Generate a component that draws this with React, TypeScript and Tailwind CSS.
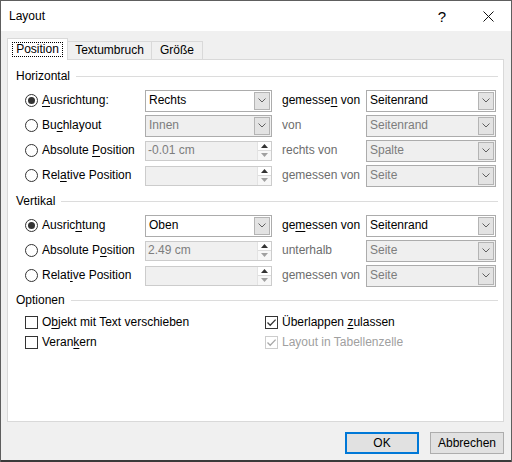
import React from "react";

const font = { fontFamily: '"Liberation Sans", Arial, sans-serif' };

function Mn({ text, at }: { text: string; at: number }) {
  if (at < 0) return <>{text}</>;
  return (
    <>
      {text.slice(0, at)}
      <span className="underline underline-offset-2">{text[at]}</span>
      {text.slice(at + 1)}
    </>
  );
}

function Radio({ checked }: { checked?: boolean }) {
  return (
    <span className="flex h-[13px] w-[13px] shrink-0 items-center justify-center rounded-full border border-[#333] bg-white">
      {checked && <span className="h-[7px] w-[7px] rounded-full bg-[#333]" />}
    </span>
  );
}

function Check({ checked, disabled }: { checked?: boolean; disabled?: boolean }) {
  return (
    <span
      className={
        "flex h-[13px] w-[13px] shrink-0 items-center justify-center border bg-white " +
        (disabled ? "border-[#cccccc]" : "border-[#333]")
      }
    >
      {checked && (
        <svg width="11" height="11" viewBox="0 0 11 11">
          <path
            d="M1.5 5.5 L4.2 8.3 L9.6 2.6"
            fill="none"
            stroke={disabled ? "#a8a8a8" : "#333"}
            strokeWidth="1.3"
          />
        </svg>
      )}
    </span>
  );
}

function Combo({ value, enabled, w }: { value: string; enabled?: boolean; w: string }) {
  return (
    <div
      className={
        "flex h-[22px] shrink-0 border border-[#acacac] " +
        w +
        (enabled ? " bg-white text-black" : " bg-[#efefef] text-[#7d7d7d]")
      }
    >
      <div className="flex flex-1 items-center pl-[3px]">{value}</div>
      <div className="m-px flex w-[16px] items-center justify-center border border-[#b4b4b4] bg-[#e3e3e3]">
        <svg width="8" height="5" viewBox="0 0 8 5">
          <path d="M0.5 0.5 L4 4 L7.5 0.5" fill="none" stroke="#606060" strokeWidth="1" />
        </svg>
      </div>
    </div>
  );
}

function Spin({ value }: { value: string }) {
  return (
    <div className="flex h-[20px] w-[127px] shrink-0 border border-[#cccccc] bg-[#f0f0f0] text-[#7d7d7d]">
      <div className="flex flex-1 items-center pl-[2px]">{value}</div>
      <div className="flex w-[14px] flex-col border-l border-[#e3e3e3]">
        <div className="flex flex-1 items-center justify-center border-b border-[#dcdcdc] bg-white">
          <svg width="7" height="4" viewBox="0 0 7 4">
            <path d="M0 4 L3.5 0 L7 4 Z" fill="#333" />
          </svg>
        </div>
        <div className="flex flex-1 items-center justify-center bg-[#f7f7f7]">
          <svg width="7" height="4" viewBox="0 0 7 4">
            <path d="M0 0 L7 0 L3.5 4 Z" fill="#a0a0a0" />
          </svg>
        </div>
      </div>
    </div>
  );
}

function Header({ title }: { title: string }) {
  return (
    <div className="flex h-[24px] items-center gap-[6px]">
      <span>{title}</span>
      <span className="h-px flex-1 bg-[#dcdcdc]" />
    </div>
  );
}

type RowProps = {
  label: string;
  at: number;
  checked?: boolean;
  field: React.ReactNode;
  rel: string;
  relAt: number;
  relEnabled?: boolean;
  combo: string;
  comboEnabled?: boolean;
};

function Row(p: RowProps) {
  return (
    <div className="flex h-[25px] items-center">
      <div className="flex w-[129px] shrink-0 items-center gap-[4px] pl-[9px]">
        <Radio checked={p.checked} />
        <span>
          <Mn text={p.label} at={p.at} />
        </span>
      </div>
      {p.field}
      <div className={"w-[94px] shrink-0 pl-[10px] " + (p.relEnabled ? "text-black" : "text-[#6d6d6d]")}>
        <Mn text={p.rel} at={p.relAt} />
      </div>
      <Combo value={p.combo} enabled={p.comboEnabled} w="w-[130px]" />
    </div>
  );
}

export default function App() {
  return (
    <div
      style={font}
      className="flex h-[462px] w-[512px] flex-col border-x border-t border-[#5e5e5e] bg-[#f0f0f0] text-[12px] leading-[15px] text-black"
    >
      {/* title bar */}
      <div className="flex h-[30px] shrink-0 items-center bg-white pl-[8px]">
        <span className="flex-1">Layout</span>
        <span className="w-[46px] text-center text-[15px]">?</span>
        <span className="flex w-[46px] items-center justify-center">
          <svg width="11" height="11" viewBox="0 0 11 11">
            <path d="M0.5 0.5 L10.5 10.5 M10.5 0.5 L0.5 10.5" stroke="#111" strokeWidth="1" />
          </svg>
        </span>
      </div>

      {/* tabs */}
      <div className="flex h-[28px] shrink-0 items-end pl-[6px] pt-[7px]">
        <div className="relative z-10 -mb-px flex h-[22px] w-[61px] items-center justify-center border-x border-t border-[#d9d9d9] bg-white">
          <span className="border border-dotted border-black px-[3px] leading-[13px]">Position</span>
        </div>
        <div className="flex h-[18px] w-[84px] items-center justify-center border-t border-r border-[#d9d9d9] bg-[#f0f0f0]">
          Textumbruch
        </div>
        <div className="flex h-[18px] w-[51px] items-center justify-center border-t border-r border-[#d9d9d9] bg-[#f0f0f0]">
          Größe
        </div>
      </div>

      {/* panel */}
      <div className="ml-[6px] mr-[7px] h-[363px] shrink-0 border border-[#d9d9d9] bg-white pl-[8px] pr-[5px] pt-[4px]">
        <Header title="Horizontal" />
        <Row
          label="Ausrichtung:"
          at={0}
          checked
          field={<Combo value="Rechts" enabled w="w-[127px]" />}
          rel="gemessen von"
          relAt={7}
          relEnabled
          combo="Seitenrand"
          comboEnabled
        />
        <Row
          label="Buchlayout"
          at={2}
          field={<Combo value="Innen" w="w-[127px]" />}
          rel="von"
          relAt={-1}
          combo="Seitenrand"
        />
        <Row
          label="Absolute Position"
          at={9}
          field={<Spin value="-0.01 cm" />}
          rel="rechts von"
          relAt={-1}
          combo="Spalte"
        />
        <Row
          label="Relative Position"
          at={3}
          field={<Spin value="" />}
          rel="gemessen von"
          relAt={-1}
          combo="Seite"
        />

        <div className="mt-px">
          <Header title="Vertikal" />
        </div>
        <Row
          label="Ausrichtung"
          at={6}
          checked
          field={<Combo value="Oben" enabled w="w-[127px]" />}
          rel="gemessen von"
          relAt={2}
          relEnabled
          combo="Seitenrand"
          comboEnabled
        />
        <Row
          label="Absolute Position"
          at={10}
          field={<Spin value="2.49 cm" />}
          rel="unterhalb"
          relAt={-1}
          combo="Seite"
        />
        <Row
          label="Relative Position"
          at={5}
          field={<Spin value="" />}
          rel="gemessen von"
          relAt={-1}
          combo="Seite"
        />

        <div className="mt-px flex h-[23px] items-center gap-[6px]">
          <span>Optionen</span>
          <span className="h-px flex-1 bg-[#dcdcdc]" />
        </div>
        <div className="grid grid-cols-[240px_1fr]">
          <div className="flex h-[20px] items-center gap-[4px] pl-[9px]">
            <Check />
            <span>
              <Mn text="Objekt mit Text verschieben" at={1} />
            </span>
          </div>
          <div className="flex h-[20px] items-center gap-[4px] pl-[9px]">
            <Check checked />
            <span>
              <Mn text="Überlappen zulassen" at={11} />
            </span>
          </div>
          <div className="flex h-[20px] items-center gap-[4px] pl-[9px]">
            <Check />
            <span>
              <Mn text="Verankern" at={5} />
            </span>
          </div>
          <div className="flex h-[20px] items-center gap-[4px] pl-[9px] text-[#a0a0a0]">
            <Check checked disabled />
            <span>Layout in Tabellenzelle</span>
          </div>
        </div>
      </div>

      {/* buttons */}
      <div className="flex flex-1 items-start justify-end gap-[11px] pr-[7px] pt-[10px]">
        <button className="h-[22px] w-[74px] border-2 border-[#0078d7] bg-[#e1e1e1]">OK</button>
        <button className="h-[22px] w-[74px] border border-[#adadad] bg-[#e1e1e1]">Abbrechen</button>
      </div>
      <div className="h-[2px] shrink-0 bg-[#3a3a3a]" />
    </div>
  );
}
